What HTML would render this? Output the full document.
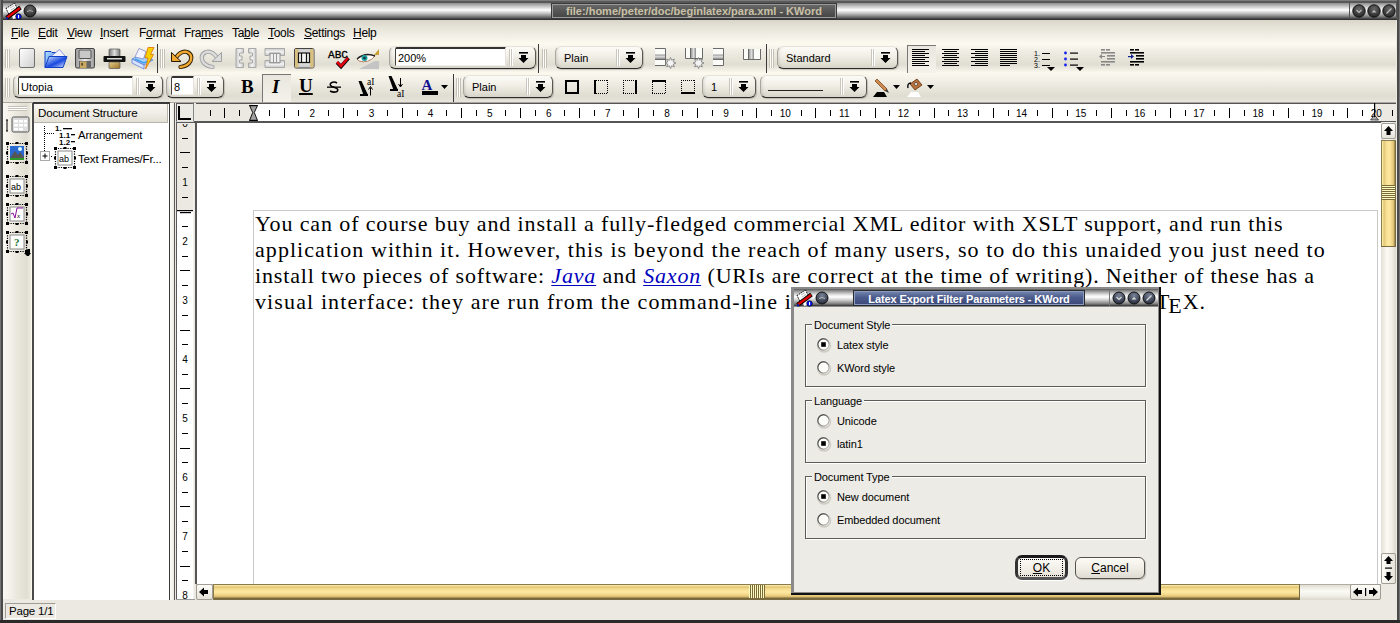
<!DOCTYPE html><html><head><meta charset="utf-8"><style>
*{box-sizing:border-box;margin:0;padding:0}
html,body{width:1400px;height:623px;overflow:hidden;background:#ebe9e1;font-family:"Liberation Sans",sans-serif;font-size:11px;color:#000}
.a{position:absolute}
.t{white-space:nowrap;line-height:13px}
u{text-decoration:underline}
.grip{background:repeating-linear-gradient(90deg,#c9c6bb 0,#c9c6bb 1px,#fbfaf6 1px,#fbfaf6 2px)}
.combo{border:1px solid #8a877e;border-radius:5px;background:linear-gradient(#fbfaf5,#eeece4 45%,#e2dfd5 80%,#d8d5ca);box-shadow:0 1px 1px rgba(0,0,0,.25)}
.field{background:#fff;border:1px solid #6f6c64;border-right-color:#e0ded6;border-bottom-color:#e0ded6}
</style></head><body>
<div class="a" style="left:0px;top:0px;width:1400px;height:623px;background:#ebe9e1"></div>
<div class="a" style="left:0px;top:0px;width:1400px;height:20px;background:linear-gradient(#7c7c7c 0,#7c7c7c 1px,#585858 1px,#585858 2.5px,#8e8e8e 3px,#cfcfcf 7px,#ffffff 10px,#d4d4d4 12.5px,#8a8a8a 16px,#4a4a4a 18.5px,#262626 20px)"></div>
<div class="a" style="left:551px;top:3px;width:286px;height:16px;background:linear-gradient(#6a6a6a,#555 50%,#444);border:1px solid #3a3a3a;box-shadow:inset 0 0 0 1px #9a9a9a"></div>
<div class="a t" style="left:551px;top:5px;width:286px;text-align:center;color:#c9c1a6;font-weight:bold;font-size:11px;line-height:13px;letter-spacing:0px">file:/home/peter/doc/beginlatex/para.xml - KWord</div>
<svg class="a" style="left:5px;top:2px;" width="18" height="18" viewBox="0 0 18 18"><path d="M1 6.5 L9.5 1 L13 8 L4.5 13.5 Z" fill="#fff" stroke="#000" stroke-width="1" stroke-dasharray="1.5 1"/><path d="M5 6 L9 3.5 M6 8 L10 5.5" stroke="#888" stroke-width=".6"/><path d="M7 14 L11 12 L12 16 L8 17 Z" fill="#fff"/><path d="M1.5 16 L15.5 5.5" stroke="#000" stroke-width="4.2"/><path d="M2 15.5 L15 6" stroke="#e00000" stroke-width="2.4"/><path d="M1 17 L3 15.5" stroke="#1020c0" stroke-width="1.6"/><circle cx="13.5" cy="14.5" r="2.8" fill="#0010f0" stroke="#000" stroke-width=".6"/><rect x="13" y="13" width="1.1" height="3.2" fill="#fff"/></svg>
<svg class="a" style="left:22px;top:2.5px;" width="16" height="16" viewBox="0 0 16 16"><defs><radialGradient id="rb30" cx="50%" cy="35%" r="60%"><stop offset="0" stop-color="#6a6a6a"/><stop offset="1" stop-color="#2a2a2a"/></radialGradient></defs><circle cx="8" cy="8" r="6" fill="url(#rb30)" stroke="#111" stroke-width="1"/><path d="M5 8.5 Q8 6.5 11 8.5" stroke="#aaa" fill="none" stroke-width="1"/></svg>
<svg class="a" style="left:1350.5px;top:3.3000000000000007px;" width="16" height="16" viewBox="0 0 16 16"><defs><radialGradient id="rb1358.5" cx="50%" cy="35%" r="60%"><stop offset="0" stop-color="#6a6a6a"/><stop offset="1" stop-color="#2a2a2a"/></radialGradient></defs><circle cx="8" cy="8" r="6.2" fill="url(#rb1358.5)" stroke="#111" stroke-width="1"/><path d="M5.5 7 L8 9.5 L10.5 7" stroke="#bbb" fill="none" stroke-width="1.2"/></svg>
<svg class="a" style="left:1365.5px;top:3.3000000000000007px;" width="16" height="16" viewBox="0 0 16 16"><defs><radialGradient id="rb1373.5" cx="50%" cy="35%" r="60%"><stop offset="0" stop-color="#6a6a6a"/><stop offset="1" stop-color="#2a2a2a"/></radialGradient></defs><circle cx="8" cy="8" r="6.2" fill="url(#rb1373.5)" stroke="#111" stroke-width="1"/><path d="M5.5 9.5 L8 7 L10.5 9.5 Z" fill="#bbb"/></svg>
<svg class="a" style="left:1380.5px;top:3.3000000000000007px;" width="16" height="16" viewBox="0 0 16 16"><defs><radialGradient id="rb1388.5" cx="50%" cy="35%" r="60%"><stop offset="0" stop-color="#6a6a6a"/><stop offset="1" stop-color="#2a2a2a"/></radialGradient></defs><circle cx="8" cy="8" r="6.2" fill="url(#rb1388.5)" stroke="#111" stroke-width="1"/><path d="M5.5 10.5 L10.5 5.5" stroke="#bbb" stroke-width="1.2"/></svg>
<div class="a" style="left:1349px;top:3px;width:1px;height:16px;background:#555"></div>
<div class="a" style="left:1396px;top:3px;width:1px;height:16px;background:#555"></div>
<div class="a" style="left:2px;top:20px;width:1394px;height:24px;background:linear-gradient(#d9d5c9 0,#e6e3d8 30%,#f3f1e7 70%,#fdfbf0 100%)"></div>
<div class="a t" style="left:11px;top:27px;font-size:12px;line-height:13px;letter-spacing:-0.3px"><u>F</u>ile</div>
<div class="a t" style="left:38px;top:27px;font-size:12px;line-height:13px;letter-spacing:-0.3px"><u>E</u>dit</div>
<div class="a t" style="left:67px;top:27px;font-size:12px;line-height:13px;letter-spacing:-0.3px"><u>V</u>iew</div>
<div class="a t" style="left:100px;top:27px;font-size:12px;line-height:13px;letter-spacing:-0.3px"><u>I</u>nsert</div>
<div class="a t" style="left:139px;top:27px;font-size:12px;line-height:13px;letter-spacing:-0.3px">F<u>o</u>rmat</div>
<div class="a t" style="left:184px;top:27px;font-size:12px;line-height:13px;letter-spacing:-0.3px">Fra<u>m</u>es</div>
<div class="a t" style="left:232px;top:27px;font-size:12px;line-height:13px;letter-spacing:-0.3px">Ta<u>b</u>le</div>
<div class="a t" style="left:268px;top:27px;font-size:12px;line-height:13px;letter-spacing:-0.3px"><u>T</u>ools</div>
<div class="a t" style="left:304px;top:27px;font-size:12px;line-height:13px;letter-spacing:-0.3px"><u>S</u>ettings</div>
<div class="a t" style="left:353px;top:27px;font-size:12px;line-height:13px;letter-spacing:-0.3px"><u>H</u>elp</div>
<div class="a" style="left:2px;top:44px;width:1394px;height:29px;background:linear-gradient(#fdfbf0 0,#f0eee5 22%,#e6e3d8 55%,#e0ddd2 70%,#eeebe2 86%,#fcfaef 100%)"></div>
<div class="a" style="left:2px;top:73px;width:1394px;height:30px;background:linear-gradient(#fcfaef 0,#f0eee5 28%,#e6e3d9 58%,#dfdcd1 77%,#e6e4db 93%,#ebe9e1 100%)"></div>
<div class="a" style="left:5px;top:49px;width:5px;height:19px;"></div>
<svg class="a" style="left:5px;top:49px;" width="5" height="19" viewBox="0 0 5 19"><rect x="0" y="0" width="1" height="19" fill="#c4c1b6"/><rect x="1" y="0" width="1" height="19" fill="#fdfcf8"/><rect x="2" y="0" width="1" height="19" fill="#c4c1b6"/><rect x="3" y="0" width="1" height="19" fill="#fdfcf8"/><rect x="4" y="0" width="1" height="19" fill="#c4c1b6"/><rect x="5" y="0" width="1" height="19" fill="#fdfcf8"/></svg>
<svg class="a" style="left:18px;top:47px;" width="18" height="22" viewBox="0 0 18 22"><defs><linearGradient id="nd" x1="0" y1="0" x2="1" y2="1"><stop offset="0" stop-color="#ffffff"/><stop offset="1" stop-color="#cfcfcf"/></linearGradient></defs><rect x="1.5" y="1.5" width="15" height="19" rx="1.5" fill="url(#nd)" stroke="#707070"/></svg>
<svg class="a" style="left:44px;top:48px;" width="24" height="21" viewBox="0 0 24 21"><defs><linearGradient id="fb" x1="0" y1="0" x2="1" y2="1"><stop offset="0" stop-color="#b8e8ff"/><stop offset="1" stop-color="#2a60e0"/></linearGradient><linearGradient id="ff" x1="0" y1="0" x2="1" y2="1"><stop offset="0" stop-color="#d8ecff"/><stop offset=".55" stop-color="#1848e0"/><stop offset="1" stop-color="#e8eeff"/></linearGradient></defs><path d="M1 3.5 H7 L8 4.5 H13 V19.5 H1 Z" fill="url(#fb)" stroke="#1040c8"/><path d="M5 10 L15.5 1.5 L21 8 L13 14 Z" fill="#f0f0ff" stroke="#7080d0" stroke-width=".8"/><path d="M1 19.5 L5 8.5 H23 L19 19.5 Z" fill="url(#ff)" stroke="#1040c8"/></svg>
<svg class="a" style="left:75px;top:48px;" width="20" height="21" viewBox="0 0 20 21"><defs><linearGradient id="fl" x1="0" y1="0" x2="1" y2="0"><stop offset="0" stop-color="#999"/><stop offset=".5" stop-color="#eee"/><stop offset="1" stop-color="#999"/></linearGradient></defs><rect x="0.5" y="0.5" width="19" height="19.5" rx="1.5" fill="url(#fl)" stroke="#444"/><rect x="4" y="2" width="12" height="8.5" rx="1" fill="#c8c8c8" stroke="#333" stroke-width=".8"/><rect x="4" y="13" width="12" height="7" fill="#666"/><rect x="5" y="13.5" width="6.5" height="6.5" fill="#c8a860"/><rect x="6.5" y="15" width="1.2" height="2.5" fill="#222"/></svg>
<svg class="a" style="left:103px;top:48px;" width="23" height="21" viewBox="0 0 23 21"><defs><linearGradient id="pr" x1="0" y1="0" x2="1" y2="0"><stop offset="0" stop-color="#777"/><stop offset=".5" stop-color="#ddd"/><stop offset="1" stop-color="#777"/></linearGradient><linearGradient id="pg" x1="0" y1="0" x2="1" y2="1"><stop offset="0" stop-color="#e8d090"/><stop offset="1" stop-color="#9a7020"/></linearGradient></defs><rect x="6" y="1" width="11" height="8" rx="1" fill="url(#pr)" stroke="#555" stroke-width=".7"/><rect x="0.5" y="8" width="22" height="6" rx="1" fill="#111"/><rect x="4" y="10" width="15" height="1.5" fill="#ddd"/><rect x="6" y="14" width="11" height="6.5" rx="1" fill="url(#pg)" stroke="#555" stroke-width=".7"/></svg>
<svg class="a" style="left:131px;top:46px;" width="24" height="24" viewBox="0 0 24 24"><path d="M1 13 L10 8.5 L22 14 L13 19 Z" fill="#a8d0f8" stroke="#5070d0" stroke-width=".7"/><path d="M1 13 V17 L13 23 V19 Z" fill="#d8e4ff" stroke="#5070d0" stroke-width=".7"/><path d="M4 11 L8 2.5 L15 5.5 L12.5 13 Z" fill="#f4f4ff" stroke="#7080c0" stroke-width=".7"/><path d="M4 13 L13 17 L21 13" fill="none" stroke="#40a0f0" stroke-width="1.5"/><path d="M17 1.5 L23 1.5 L19.5 8.5 L22.5 8.5 L14.5 23 L17 12 L14 12 Z" fill="#f8d000" stroke="#e07000" stroke-width=".8"/></svg>
<div class="a" style="left:157px;top:44px;width:1px;height:29px;background:#3a3a3a"></div>
<div class="a" style="left:160px;top:49px;width:5px;height:19px;"></div>
<svg class="a" style="left:160px;top:49px;" width="5" height="19" viewBox="0 0 5 19"><rect x="0" y="0" width="1" height="19" fill="#c4c1b6"/><rect x="1" y="0" width="1" height="19" fill="#fdfcf8"/><rect x="2" y="0" width="1" height="19" fill="#c4c1b6"/><rect x="3" y="0" width="1" height="19" fill="#fdfcf8"/><rect x="4" y="0" width="1" height="19" fill="#c4c1b6"/><rect x="5" y="0" width="1" height="19" fill="#fdfcf8"/></svg>
<svg class="a" style="left:170px;top:48px;" width="24" height="22" viewBox="0 0 24 22"><path d="M6 9.5 Q11 2.5 17 4 Q23 6.5 20.5 13 Q18 18 10.5 19" stroke="#2a1a00" stroke-width="4.2" fill="none" stroke-linecap="round"/><path d="M6 9.5 Q11 2.5 17 4 Q23 6.5 20.5 13 Q18 18 10.5 19" stroke="#f0a830" stroke-width="2.4" fill="none" stroke-linecap="round"/><path d="M1.5 4.5 L1.5 13.5 L11 13.5 Z" fill="#f0a830" stroke="#2a1a00" stroke-width="1" stroke-linejoin="round"/></svg>
<svg class="a" style="left:199px;top:48px;" width="24" height="22" viewBox="0 0 24 22"><g transform="translate(24 0) scale(-1 1)"><path d="M6 9.5 Q11 2.5 17 4 Q23 6.5 20.5 13 Q18 18 10.5 19" stroke="#a0a0a0" stroke-width="4.2" fill="none" stroke-linecap="round"/><path d="M6 9.5 Q11 2.5 17 4 Q23 6.5 20.5 13 Q18 18 10.5 19" stroke="#dcdcdc" stroke-width="2.4" fill="none" stroke-linecap="round"/><path d="M1.5 4.5 L1.5 13.5 L11 13.5 Z" fill="#dcdcdc" stroke="#a0a0a0" stroke-width="1" stroke-linejoin="round"/></g></svg>
<svg class="a" style="left:235px;top:48px;" width="22" height="21" viewBox="0 0 22 21"><defs><linearGradient id="gv" x1="0" y1="0" x2="1" y2="0"><stop offset="0" stop-color="#c8c8c8"/><stop offset=".5" stop-color="#f4f4f4"/><stop offset="1" stop-color="#c8c8c8"/></linearGradient><linearGradient id="gh" x1="0" y1="0" x2="0" y2="1"><stop offset="0" stop-color="#c8c8c8"/><stop offset=".5" stop-color="#f4f4f4"/><stop offset="1" stop-color="#c8c8c8"/></linearGradient></defs><path d="M1 0.5 H8.5 V5 H4.5 V8 H7 V12 H4.5 V15 H8.5 V19.5 H1 Z" fill="url(#gv)" stroke="#a8a8a8" stroke-linejoin="round"/><path d="M21 0.5 H13.5 V5 H17.5 V8 H15 V12 H17.5 V15 H13.5 V19.5 H21 Z" fill="url(#gv)" stroke="#a8a8a8" stroke-linejoin="round"/></svg>
<svg class="a" style="left:264px;top:48px;" width="22" height="21" viewBox="0 0 22 21"><defs><linearGradient id="gv" x1="0" y1="0" x2="1" y2="0"><stop offset="0" stop-color="#c8c8c8"/><stop offset=".5" stop-color="#f4f4f4"/><stop offset="1" stop-color="#c8c8c8"/></linearGradient><linearGradient id="gh" x1="0" y1="0" x2="0" y2="1"><stop offset="0" stop-color="#c8c8c8"/><stop offset=".5" stop-color="#f4f4f4"/><stop offset="1" stop-color="#c8c8c8"/></linearGradient></defs><path d="M1 0.5 H20.5 V7.5 H16 V5 H5.5 V7.5 H1 Z" fill="url(#gh)" stroke="#a8a8a8" stroke-linejoin="round"/><path d="M1 19.5 H20.5 V12.5 H16 V15 H5.5 V12.5 H1 Z" fill="url(#gh)" stroke="#a8a8a8" stroke-linejoin="round"/><rect x="6" y="5.5" width="10" height="9" fill="#eee" stroke="#999"/><path d="M9.5 5.5 V14.5 M12.5 5.5 V14.5" stroke="#999"/></svg>
<svg class="a" style="left:294px;top:48px;" width="21" height="21" viewBox="0 0 21 21"><defs><linearGradient id="gv" x1="0" y1="0" x2="1" y2="0"><stop offset="0" stop-color="#c8c8c8"/><stop offset=".5" stop-color="#f4f4f4"/><stop offset="1" stop-color="#c8c8c8"/></linearGradient><linearGradient id="gh" x1="0" y1="0" x2="0" y2="1"><stop offset="0" stop-color="#c8c8c8"/><stop offset=".5" stop-color="#f4f4f4"/><stop offset="1" stop-color="#c8c8c8"/></linearGradient></defs><rect x="0.5" y="0.5" width="19.5" height="19.5" rx="1.5" fill="url(#gh)" stroke="#444"/><rect x="1" y="1" width="3.5" height="18.5" fill="#d8c080"/><rect x="16" y="1" width="3.5" height="18.5" fill="#d8c080"/><rect x="4.5" y="5" width="11" height="9.5" fill="#f4f4f4" stroke="#111" stroke-width="1.2"/><path d="M7.5 5 V14.5 M12.5 5 V14.5" stroke="#111" stroke-width="1.2"/></svg>
<svg class="a" style="left:327px;top:47px;" width="24" height="23" viewBox="0 0 24 23"><text x="1" y="11" font-family="Liberation Mono" font-size="11" fill="#000" stroke="#000" stroke-width=".3" textLength="20" lengthAdjust="spacingAndGlyphs">ABC</text><path d="M10 15.5 L14 19.5 L21.5 11" stroke="#000" stroke-width="3.6" fill="none" stroke-linejoin="miter"/><path d="M10 15 L14 19 L21 11" stroke="#e00010" stroke-width="2.6" fill="none"/></svg>
<svg class="a" style="left:356px;top:47px;" width="25" height="23" viewBox="0 0 25 23"><path d="M3 22 L23 12 V22 Z" fill="#c4c4c4"/><path d="M23 2 L18 8 H23 Z" fill="#c8a030"/><rect x="18" y="8" width="5" height="6" fill="#e8e4d0"/><path d="M1 12 Q9 5 19 9 Q12 17 3 14 Z" fill="#fff" stroke="#b07050" stroke-width=".9"/><path d="M1 12 Q9 5 19 9" fill="none" stroke="#222" stroke-width="1.4"/><circle cx="8.5" cy="11" r="3" fill="#20a0a0"/><circle cx="8.5" cy="11" r="1.3" fill="#103040"/></svg>
<div class="a" style="left:389px;top:46px;width:147px;height:23px;border:1px solid #8a877e;border-top-color:#e6e3da;border-left-color:#a9a69d;border-right-color:#5a5750;border-bottom-color:#2e2c28;border-radius:6px;background:linear-gradient(#fcfbf7 0,#f2f0e8 40%,#e4e1d7 75%,#d6d3c8 100%);box-shadow:1px 1px 1px rgba(0,0,0,.18), inset 3px 0 3px -2px rgba(0,0,0,.12)"></div>
<svg class="a" style="left:509px;top:49px;" width="4" height="17" viewBox="0 0 4 17"><rect x="0" width="1" height="100" fill="#c9c6bb"/><rect x="1" width="1" height="100" fill="#fff"/><rect x="2" width="1" height="100" fill="#c9c6bb"/><rect x="3" width="1" height="100" fill="#fff"/></svg>
<svg class="a" style="left:517px;top:51px;" width="13" height="14" viewBox="0 0 13 14"><rect x="2" y="1" width="9" height="1.6" fill="#000"/><path d="M4 4 H9 V7 H11.5 L6.5 12 L1.5 7 H4 Z" fill="#000"/></svg>
<div class="a" style="left:395px;top:47px;width:111px;height:19px;background:#fff;border:1px solid #46433c;border-top:2px solid #333;border-right:1px solid #e6e4dc;border-bottom:1px solid #f0eee8;border-radius:2px 0 0 0"></div>
<div class="a t" style="left:398px;top:52px;font-size:11px;line-height:13px">200%</div>
<div class="a" style="left:538px;top:44px;width:1px;height:29px;background:#3a3a3a"></div>
<div class="a" style="left:542px;top:49px;width:5px;height:19px;"></div>
<svg class="a" style="left:542px;top:49px;" width="5" height="19" viewBox="0 0 5 19"><rect x="0" y="0" width="1" height="19" fill="#c4c1b6"/><rect x="1" y="0" width="1" height="19" fill="#fdfcf8"/><rect x="2" y="0" width="1" height="19" fill="#c4c1b6"/><rect x="3" y="0" width="1" height="19" fill="#fdfcf8"/><rect x="4" y="0" width="1" height="19" fill="#c4c1b6"/><rect x="5" y="0" width="1" height="19" fill="#fdfcf8"/></svg>
<div class="a" style="left:555px;top:46px;width:88px;height:23px;border:1px solid #8a877e;border-top-color:#e6e3da;border-left-color:#a9a69d;border-right-color:#5a5750;border-bottom-color:#2e2c28;border-radius:6px;background:linear-gradient(#fcfbf7 0,#f2f0e8 40%,#e4e1d7 75%,#d6d3c8 100%);box-shadow:1px 1px 1px rgba(0,0,0,.18), inset 3px 0 3px -2px rgba(0,0,0,.12)"></div>
<svg class="a" style="left:616px;top:49px;" width="4" height="17" viewBox="0 0 4 17"><rect x="0" width="1" height="100" fill="#c9c6bb"/><rect x="1" width="1" height="100" fill="#fff"/><rect x="2" width="1" height="100" fill="#c9c6bb"/><rect x="3" width="1" height="100" fill="#fff"/></svg>
<svg class="a" style="left:624px;top:51px;" width="13" height="14" viewBox="0 0 13 14"><rect x="2" y="1" width="9" height="1.6" fill="#000"/><path d="M4 4 H9 V7 H11.5 L6.5 12 L1.5 7 H4 Z" fill="#000"/></svg>
<div class="a t" style="left:564px;top:52px;font-size:11px;line-height:13px">Plain</div>
<svg class="a" style="left:655px;top:48px;" width="24" height="22" viewBox="0 0 24 22"><defs><linearGradient id="pgv" x1="0" y1="0" x2="0" y2="1"><stop offset="0" stop-color="#999"/><stop offset=".5" stop-color="#ddd"/><stop offset="1" stop-color="#888"/></linearGradient><linearGradient id="pgh" x1="0" y1="0" x2="1" y2="0"><stop offset="0" stop-color="#999"/><stop offset=".5" stop-color="#ddd"/><stop offset="1" stop-color="#888"/></linearGradient></defs><rect x="0" y="1" width="11" height="16" fill="#fbfbf8"/><rect x="0" y="6.5" width="11" height="4.5" fill="url(#pgv)"/><path d="M0 0.5 H10.5 V17.5 H0 M0 11.5 H10.5" fill="none" stroke="#6a6a6a"/><path d="M15.50 9.50 L16.65 12.23 L19.39 11.11 L18.27 13.85 L21.00 15.00 L18.27 16.15 L19.39 18.89 L16.65 17.77 L15.50 20.50 L14.35 17.77 L11.61 18.89 L12.73 16.15 L10.00 15.00 L12.73 13.85 L11.61 11.11 L14.35 12.23 Z" fill="#f4f4f4" stroke="#777" stroke-width=".8"/></svg>
<svg class="a" style="left:685px;top:48px;" width="24" height="22" viewBox="0 0 24 22"><defs><linearGradient id="pgv" x1="0" y1="0" x2="0" y2="1"><stop offset="0" stop-color="#999"/><stop offset=".5" stop-color="#ddd"/><stop offset="1" stop-color="#888"/></linearGradient><linearGradient id="pgh" x1="0" y1="0" x2="1" y2="0"><stop offset="0" stop-color="#999"/><stop offset=".5" stop-color="#ddd"/><stop offset="1" stop-color="#888"/></linearGradient></defs><rect x="1" y="0" width="16" height="10.5" fill="#fbfbf8"/><rect x="6" y="0" width="5" height="10.5" fill="url(#pgh)"/><path d="M0.5 0 V10.5 H17.5 V0 M5.5 0 V10.5" fill="none" stroke="#6a6a6a"/><path d="M13.50 9.50 L14.65 12.23 L17.39 11.11 L16.27 13.85 L19.00 15.00 L16.27 16.15 L17.39 18.89 L14.65 17.77 L13.50 20.50 L12.35 17.77 L9.61 18.89 L10.73 16.15 L8.00 15.00 L10.73 13.85 L9.61 11.11 L12.35 12.23 Z" fill="#f4f4f4" stroke="#777" stroke-width=".8"/></svg>
<svg class="a" style="left:713px;top:48px;" width="24" height="22" viewBox="0 0 24 22"><defs><linearGradient id="pgv" x1="0" y1="0" x2="0" y2="1"><stop offset="0" stop-color="#999"/><stop offset=".5" stop-color="#ddd"/><stop offset="1" stop-color="#888"/></linearGradient><linearGradient id="pgh" x1="0" y1="0" x2="1" y2="0"><stop offset="0" stop-color="#999"/><stop offset=".5" stop-color="#ddd"/><stop offset="1" stop-color="#888"/></linearGradient></defs><rect x="0" y="1" width="11" height="16" fill="#fbfbf8"/><rect x="0" y="6.5" width="11" height="4.5" fill="url(#pgv)"/><path d="M0 0.5 H10.5 V17.5 H0 M0 11.5 H10.5" fill="none" stroke="#6a6a6a"/></svg>
<svg class="a" style="left:743px;top:49px;" width="24" height="22" viewBox="0 0 24 22"><defs><linearGradient id="pgv" x1="0" y1="0" x2="0" y2="1"><stop offset="0" stop-color="#999"/><stop offset=".5" stop-color="#ddd"/><stop offset="1" stop-color="#888"/></linearGradient><linearGradient id="pgh" x1="0" y1="0" x2="1" y2="0"><stop offset="0" stop-color="#999"/><stop offset=".5" stop-color="#ddd"/><stop offset="1" stop-color="#888"/></linearGradient></defs><rect x="1" y="0" width="16" height="10.5" fill="#fbfbf8"/><rect x="6" y="0" width="5" height="10.5" fill="url(#pgh)"/><path d="M0.5 0 V10.5 H17.5 V0 M5.5 0 V10.5" fill="none" stroke="#6a6a6a"/></svg>
<div class="a" style="left:766px;top:44px;width:1px;height:29px;background:#3a3a3a"></div>
<div class="a" style="left:769px;top:49px;width:5px;height:19px;"></div>
<svg class="a" style="left:769px;top:49px;" width="5" height="19" viewBox="0 0 5 19"><rect x="0" y="0" width="1" height="19" fill="#c4c1b6"/><rect x="1" y="0" width="1" height="19" fill="#fdfcf8"/><rect x="2" y="0" width="1" height="19" fill="#c4c1b6"/><rect x="3" y="0" width="1" height="19" fill="#fdfcf8"/><rect x="4" y="0" width="1" height="19" fill="#c4c1b6"/><rect x="5" y="0" width="1" height="19" fill="#fdfcf8"/></svg>
<div class="a" style="left:777px;top:46px;width:121px;height:23px;border:1px solid #8a877e;border-top-color:#e6e3da;border-left-color:#a9a69d;border-right-color:#5a5750;border-bottom-color:#2e2c28;border-radius:6px;background:linear-gradient(#fcfbf7 0,#f2f0e8 40%,#e4e1d7 75%,#d6d3c8 100%);box-shadow:1px 1px 1px rgba(0,0,0,.18), inset 3px 0 3px -2px rgba(0,0,0,.12)"></div>
<svg class="a" style="left:871px;top:49px;" width="4" height="17" viewBox="0 0 4 17"><rect x="0" width="1" height="100" fill="#c9c6bb"/><rect x="1" width="1" height="100" fill="#fff"/><rect x="2" width="1" height="100" fill="#c9c6bb"/><rect x="3" width="1" height="100" fill="#fff"/></svg>
<svg class="a" style="left:879px;top:51px;" width="13" height="14" viewBox="0 0 13 14"><rect x="2" y="1" width="9" height="1.6" fill="#000"/><path d="M4 4 H9 V7 H11.5 L6.5 12 L1.5 7 H4 Z" fill="#000"/></svg>
<div class="a t" style="left:786px;top:52px;font-size:11px;line-height:13px">Standard</div>
<div class="a" style="left:907px;top:45px;width:29px;height:28px;background:linear-gradient(#e9e6dd,#f4f2ea);border-left:1px solid #777;border-top:1px solid #777"></div>
<svg class="a" style="left:912px;top:49px;" width="18" height="18" viewBox="0 0 18 18"><rect x="0" y="0" width="17" height="1" fill="#000"/><rect x="0" y="2" width="13" height="1" fill="#000"/><rect x="0" y="4" width="17" height="1" fill="#000"/><rect x="0" y="6" width="13" height="1" fill="#000"/><rect x="0" y="8" width="17" height="1" fill="#000"/><rect x="0" y="10" width="13" height="1" fill="#000"/><rect x="0" y="12" width="17" height="1" fill="#000"/><rect x="0" y="14" width="13" height="1" fill="#000"/><rect x="0" y="16" width="17" height="1" fill="#000"/></svg>
<svg class="a" style="left:942px;top:49px;" width="18" height="18" viewBox="0 0 18 18"><rect x="0" y="0" width="17" height="1" fill="#000"/><rect x="2" y="2" width="13" height="1" fill="#000"/><rect x="0" y="4" width="17" height="1" fill="#000"/><rect x="2" y="6" width="13" height="1" fill="#000"/><rect x="0" y="8" width="17" height="1" fill="#000"/><rect x="2" y="10" width="13" height="1" fill="#000"/><rect x="0" y="12" width="17" height="1" fill="#000"/><rect x="2" y="14" width="13" height="1" fill="#000"/><rect x="0" y="16" width="17" height="1" fill="#000"/></svg>
<svg class="a" style="left:971px;top:49px;" width="18" height="18" viewBox="0 0 18 18"><rect x="0" y="0" width="17" height="1" fill="#000"/><rect x="4" y="2" width="13" height="1" fill="#000"/><rect x="0" y="4" width="17" height="1" fill="#000"/><rect x="4" y="6" width="13" height="1" fill="#000"/><rect x="0" y="8" width="17" height="1" fill="#000"/><rect x="4" y="10" width="13" height="1" fill="#000"/><rect x="0" y="12" width="17" height="1" fill="#000"/><rect x="4" y="14" width="13" height="1" fill="#000"/><rect x="0" y="16" width="17" height="1" fill="#000"/></svg>
<svg class="a" style="left:1000px;top:49px;" width="18" height="18" viewBox="0 0 18 18"><rect x="0" y="0" width="17" height="1" fill="#000"/><rect x="0" y="2" width="17" height="1" fill="#000"/><rect x="0" y="4" width="17" height="1" fill="#000"/><rect x="0" y="6" width="17" height="1" fill="#000"/><rect x="0" y="8" width="17" height="1" fill="#000"/><rect x="0" y="10" width="17" height="1" fill="#000"/><rect x="0" y="12" width="17" height="1" fill="#000"/><rect x="0" y="14" width="17" height="1" fill="#000"/><rect x="0" y="16" width="10" height="1" fill="#000"/></svg>
<svg class="a" style="left:1033px;top:47px;" width="28" height="26" viewBox="0 0 28 26"><g font-size="7" font-family="Liberation Sans"><text x="1" y="9">1.</text><text x="1" y="15">2.</text><text x="1" y="21">3.</text></g><rect x="9" y="6" width="8" height="1"/><rect x="9" y="12" width="8" height="1"/><rect x="9" y="18" width="8" height="1"/><path d="M14 20 H22 L18 24 Z"/></svg>
<svg class="a" style="left:1063px;top:47px;" width="28" height="26" viewBox="0 0 28 26"><circle cx="2.5" cy="6" r="1.4" fill="#1020f0"/><circle cx="2.5" cy="12" r="1.4" fill="#1020f0"/><circle cx="2.5" cy="18" r="1.4" fill="#1020f0"/><rect x="7" y="5.5" width="8" height="1.2"/><rect x="7" y="11.5" width="8" height="1.2"/><rect x="7" y="17.5" width="8" height="1.2"/><path d="M13 20 H21 L17 24 Z"/></svg>
<svg class="a" style="left:1098px;top:47px;" width="20" height="22" viewBox="0 0 20 22"><g fill="#888"><rect x="3" y="2" width="4" height="1.6"/><rect x="8" y="2" width="4" height="1.6"/><rect x="3" y="5" width="14" height="1.6"/><rect x="9" y="8" width="8" height="1.6"/><rect x="9" y="11" width="8" height="1.6"/><rect x="3" y="14" width="14" height="1.6"/><rect x="3" y="17" width="4" height="1.6"/><rect x="8" y="17" width="4" height="1.6"/><path d="M1 9.5 L4 7 V12 Z"/><rect x="3" y="9" width="4" height="1"/></g></svg>
<svg class="a" style="left:1127px;top:47px;" width="20" height="22" viewBox="0 0 20 22"><g fill="#000"><rect x="3" y="2" width="4" height="1.6"/><rect x="8" y="2" width="4" height="1.6"/><rect x="3" y="5" width="14" height="1.6"/><rect x="9" y="8" width="8" height="1.6"/><rect x="9" y="11" width="8" height="1.6"/><rect x="3" y="14" width="14" height="1.6"/><rect x="3" y="17" width="4" height="1.6"/><rect x="8" y="17" width="4" height="1.6"/></g><path d="M7 9.5 L4 7 V12 Z" fill="#102090"/><rect x="1" y="9" width="4" height="1.2" fill="#102090"/></svg>
<div class="a" style="left:5px;top:78px;width:5px;height:19px;"></div>
<svg class="a" style="left:5px;top:78px;" width="5" height="19" viewBox="0 0 5 19"><rect x="0" y="0" width="1" height="19" fill="#c4c1b6"/><rect x="1" y="0" width="1" height="19" fill="#fdfcf8"/><rect x="2" y="0" width="1" height="19" fill="#c4c1b6"/><rect x="3" y="0" width="1" height="19" fill="#fdfcf8"/><rect x="4" y="0" width="1" height="19" fill="#c4c1b6"/><rect x="5" y="0" width="1" height="19" fill="#fdfcf8"/></svg>
<div class="a" style="left:13px;top:75px;width:150px;height:23px;border:1px solid #8a877e;border-top-color:#e6e3da;border-left-color:#a9a69d;border-right-color:#5a5750;border-bottom-color:#2e2c28;border-radius:6px;background:linear-gradient(#fcfbf7 0,#f2f0e8 40%,#e4e1d7 75%,#d6d3c8 100%);box-shadow:1px 1px 1px rgba(0,0,0,.18), inset 3px 0 3px -2px rgba(0,0,0,.12)"></div>
<svg class="a" style="left:136px;top:78px;" width="4" height="17" viewBox="0 0 4 17"><rect x="0" width="1" height="100" fill="#c9c6bb"/><rect x="1" width="1" height="100" fill="#fff"/><rect x="2" width="1" height="100" fill="#c9c6bb"/><rect x="3" width="1" height="100" fill="#fff"/></svg>
<svg class="a" style="left:144px;top:80px;" width="13" height="14" viewBox="0 0 13 14"><rect x="2" y="1" width="9" height="1.6" fill="#000"/><path d="M4 4 H9 V7 H11.5 L6.5 12 L1.5 7 H4 Z" fill="#000"/></svg>
<div class="a" style="left:18px;top:76px;width:115px;height:19px;background:#fff;border:1px solid #46433c;border-top:2px solid #333;border-right:1px solid #e6e4dc;border-bottom:1px solid #f0eee8;border-radius:2px 0 0 0"></div>
<div class="a t" style="left:21px;top:81px;font-size:11px;line-height:13px">Utopia</div>
<div class="a" style="left:166px;top:75px;width:58px;height:23px;border:1px solid #8a877e;border-top-color:#e6e3da;border-left-color:#a9a69d;border-right-color:#5a5750;border-bottom-color:#2e2c28;border-radius:6px;background:linear-gradient(#fcfbf7 0,#f2f0e8 40%,#e4e1d7 75%,#d6d3c8 100%);box-shadow:1px 1px 1px rgba(0,0,0,.18), inset 3px 0 3px -2px rgba(0,0,0,.12)"></div>
<svg class="a" style="left:197px;top:78px;" width="4" height="17" viewBox="0 0 4 17"><rect x="0" width="1" height="100" fill="#c9c6bb"/><rect x="1" width="1" height="100" fill="#fff"/><rect x="2" width="1" height="100" fill="#c9c6bb"/><rect x="3" width="1" height="100" fill="#fff"/></svg>
<svg class="a" style="left:205px;top:80px;" width="13" height="14" viewBox="0 0 13 14"><rect x="2" y="1" width="9" height="1.6" fill="#000"/><path d="M4 4 H9 V7 H11.5 L6.5 12 L1.5 7 H4 Z" fill="#000"/></svg>
<div class="a" style="left:171px;top:76px;width:23px;height:19px;background:#fff;border:1px solid #46433c;border-top:2px solid #333;border-right:1px solid #e6e4dc;border-bottom:1px solid #f0eee8;border-radius:2px 0 0 0"></div>
<div class="a t" style="left:174px;top:81px;font-size:11px;line-height:13px">8</div>
<div class="a t" style="left:241px;top:77px;font-family:'Liberation Serif',serif;font-weight:bold;font-size:19px;line-height:20px">B</div>
<div class="a" style="left:262px;top:74px;width:29px;height:28px;background:linear-gradient(#e9e6dd,#f4f2ea);border-left:1px solid #777;border-top:1px solid #777"></div>
<div class="a t" style="left:272px;top:77px;font-family:'Liberation Serif',serif;font-weight:bold;font-style:italic;font-size:19px;line-height:20px">I</div>
<div class="a t" style="left:299px;top:76px;font-family:'Liberation Serif',serif;font-weight:bold;font-size:19px;line-height:20px;text-decoration:underline;text-decoration-thickness:1.5px;text-underline-offset:1px">U</div>
<svg class="a" style="left:326px;top:79px;" width="16" height="16" viewBox="0 0 16 16"><path d="M11 4 Q8 2 5 4 Q3 6 6 7.5 L10 9 Q13 10.5 11 12.5 Q8 14 4 12" fill="none" stroke="#000" stroke-width="1.6"/><rect x="1" y="7.5" width="14" height="1.3" fill="#000"/></svg>
<svg class="a" style="left:357px;top:76px;" width="22" height="24" viewBox="0 0 22 24"><path d="M1.5 5 L4.5 5 L11 19 L6.5 19 Z" fill="#000"/><rect x="3" y="18" width="8" height="2" fill="#000"/><text x="10" y="8.5" font-size="9.5" font-family="Liberation Serif">aI</text><path d="M13.5 19.5 V11.5" stroke="#000" stroke-width="1"/><path d="M11.5 13.5 L13.5 10.5 L15.5 13.5" stroke="#000" fill="none" stroke-width="1"/></svg>
<svg class="a" style="left:387px;top:76px;" width="22" height="24" viewBox="0 0 22 24"><path d="M1.5 0 L4.5 0 L11 14 L6.5 14 Z" fill="#000"/><rect x="3" y="13" width="8" height="2" fill="#000"/><text x="10" y="21" font-size="9.5" font-family="Liberation Serif">aI</text><path d="M13.5 2 V10" stroke="#000" stroke-width="1"/><path d="M11.5 8 L13.5 11 L15.5 8" stroke="#000" fill="none" stroke-width="1"/></svg>
<svg class="a" style="left:421px;top:76px;" width="18" height="20" viewBox="0 0 18 20"><text x="0.5" y="13.5" font-size="15" font-weight="bold" font-family="Liberation Serif" fill="#101090">A</text><rect x="1" y="15" width="16" height="4" fill="#000"/></svg>
<svg class="a" style="left:441px;top:84px;" width="8" height="6" viewBox="0 0 8 6"><path d="M0 1 H7 L3.5 5 Z"/></svg>
<div class="a" style="left:453px;top:74px;width:1px;height:28px;background:#3a3a3a"></div>
<div class="a" style="left:456px;top:78px;width:5px;height:19px;"></div>
<svg class="a" style="left:456px;top:78px;" width="5" height="19" viewBox="0 0 5 19"><rect x="0" y="0" width="1" height="19" fill="#c4c1b6"/><rect x="1" y="0" width="1" height="19" fill="#fdfcf8"/><rect x="2" y="0" width="1" height="19" fill="#c4c1b6"/><rect x="3" y="0" width="1" height="19" fill="#fdfcf8"/><rect x="4" y="0" width="1" height="19" fill="#c4c1b6"/><rect x="5" y="0" width="1" height="19" fill="#fdfcf8"/></svg>
<div class="a" style="left:463px;top:75px;width:90px;height:23px;border:1px solid #8a877e;border-top-color:#e6e3da;border-left-color:#a9a69d;border-right-color:#5a5750;border-bottom-color:#2e2c28;border-radius:6px;background:linear-gradient(#fcfbf7 0,#f2f0e8 40%,#e4e1d7 75%,#d6d3c8 100%);box-shadow:1px 1px 1px rgba(0,0,0,.18), inset 3px 0 3px -2px rgba(0,0,0,.12)"></div>
<svg class="a" style="left:526px;top:78px;" width="4" height="17" viewBox="0 0 4 17"><rect x="0" width="1" height="100" fill="#c9c6bb"/><rect x="1" width="1" height="100" fill="#fff"/><rect x="2" width="1" height="100" fill="#c9c6bb"/><rect x="3" width="1" height="100" fill="#fff"/></svg>
<svg class="a" style="left:534px;top:80px;" width="13" height="14" viewBox="0 0 13 14"><rect x="2" y="1" width="9" height="1.6" fill="#000"/><path d="M4 4 H9 V7 H11.5 L6.5 12 L1.5 7 H4 Z" fill="#000"/></svg>
<div class="a t" style="left:472px;top:81px;font-size:11px;line-height:13px">Plain</div>
<svg class="a" style="left:565px;top:80px;" width="14" height="14" viewBox="0 0 14 14"><rect x="1" y="1" width="12" height="12" fill="none" stroke="#000" stroke-width="2"/></svg>
<svg class="a" style="left:594px;top:80px;" width="14" height="14" viewBox="0 0 14 14"><rect x="0" y="0" width="1" height="1"/><rect x="0" y="13" width="1" height="1"/><rect x="0" y="0" width="1" height="1"/><rect x="13" y="0" width="1" height="1"/><rect x="2" y="0" width="1" height="1"/><rect x="2" y="13" width="1" height="1"/><rect x="0" y="2" width="1" height="1"/><rect x="13" y="2" width="1" height="1"/><rect x="4" y="0" width="1" height="1"/><rect x="4" y="13" width="1" height="1"/><rect x="0" y="4" width="1" height="1"/><rect x="13" y="4" width="1" height="1"/><rect x="6" y="0" width="1" height="1"/><rect x="6" y="13" width="1" height="1"/><rect x="0" y="6" width="1" height="1"/><rect x="13" y="6" width="1" height="1"/><rect x="8" y="0" width="1" height="1"/><rect x="8" y="13" width="1" height="1"/><rect x="0" y="8" width="1" height="1"/><rect x="13" y="8" width="1" height="1"/><rect x="10" y="0" width="1" height="1"/><rect x="10" y="13" width="1" height="1"/><rect x="0" y="10" width="1" height="1"/><rect x="13" y="10" width="1" height="1"/><rect x="12" y="0" width="1" height="1"/><rect x="12" y="13" width="1" height="1"/><rect x="0" y="12" width="1" height="1"/><rect x="13" y="12" width="1" height="1"/><rect x="0" y="0" width="2" height="14" fill="#000"/></svg>
<svg class="a" style="left:623px;top:80px;" width="14" height="14" viewBox="0 0 14 14"><rect x="0" y="0" width="1" height="1"/><rect x="0" y="13" width="1" height="1"/><rect x="0" y="0" width="1" height="1"/><rect x="13" y="0" width="1" height="1"/><rect x="2" y="0" width="1" height="1"/><rect x="2" y="13" width="1" height="1"/><rect x="0" y="2" width="1" height="1"/><rect x="13" y="2" width="1" height="1"/><rect x="4" y="0" width="1" height="1"/><rect x="4" y="13" width="1" height="1"/><rect x="0" y="4" width="1" height="1"/><rect x="13" y="4" width="1" height="1"/><rect x="6" y="0" width="1" height="1"/><rect x="6" y="13" width="1" height="1"/><rect x="0" y="6" width="1" height="1"/><rect x="13" y="6" width="1" height="1"/><rect x="8" y="0" width="1" height="1"/><rect x="8" y="13" width="1" height="1"/><rect x="0" y="8" width="1" height="1"/><rect x="13" y="8" width="1" height="1"/><rect x="10" y="0" width="1" height="1"/><rect x="10" y="13" width="1" height="1"/><rect x="0" y="10" width="1" height="1"/><rect x="13" y="10" width="1" height="1"/><rect x="12" y="0" width="1" height="1"/><rect x="12" y="13" width="1" height="1"/><rect x="0" y="12" width="1" height="1"/><rect x="13" y="12" width="1" height="1"/><rect x="12" y="0" width="2" height="14" fill="#000"/></svg>
<svg class="a" style="left:652px;top:80px;" width="14" height="14" viewBox="0 0 14 14"><rect x="0" y="0" width="1" height="1"/><rect x="0" y="13" width="1" height="1"/><rect x="0" y="0" width="1" height="1"/><rect x="13" y="0" width="1" height="1"/><rect x="2" y="0" width="1" height="1"/><rect x="2" y="13" width="1" height="1"/><rect x="0" y="2" width="1" height="1"/><rect x="13" y="2" width="1" height="1"/><rect x="4" y="0" width="1" height="1"/><rect x="4" y="13" width="1" height="1"/><rect x="0" y="4" width="1" height="1"/><rect x="13" y="4" width="1" height="1"/><rect x="6" y="0" width="1" height="1"/><rect x="6" y="13" width="1" height="1"/><rect x="0" y="6" width="1" height="1"/><rect x="13" y="6" width="1" height="1"/><rect x="8" y="0" width="1" height="1"/><rect x="8" y="13" width="1" height="1"/><rect x="0" y="8" width="1" height="1"/><rect x="13" y="8" width="1" height="1"/><rect x="10" y="0" width="1" height="1"/><rect x="10" y="13" width="1" height="1"/><rect x="0" y="10" width="1" height="1"/><rect x="13" y="10" width="1" height="1"/><rect x="12" y="0" width="1" height="1"/><rect x="12" y="13" width="1" height="1"/><rect x="0" y="12" width="1" height="1"/><rect x="13" y="12" width="1" height="1"/><rect x="0" y="0" width="14" height="2" fill="#000"/></svg>
<svg class="a" style="left:681px;top:80px;" width="14" height="14" viewBox="0 0 14 14"><rect x="0" y="0" width="1" height="1"/><rect x="0" y="13" width="1" height="1"/><rect x="0" y="0" width="1" height="1"/><rect x="13" y="0" width="1" height="1"/><rect x="2" y="0" width="1" height="1"/><rect x="2" y="13" width="1" height="1"/><rect x="0" y="2" width="1" height="1"/><rect x="13" y="2" width="1" height="1"/><rect x="4" y="0" width="1" height="1"/><rect x="4" y="13" width="1" height="1"/><rect x="0" y="4" width="1" height="1"/><rect x="13" y="4" width="1" height="1"/><rect x="6" y="0" width="1" height="1"/><rect x="6" y="13" width="1" height="1"/><rect x="0" y="6" width="1" height="1"/><rect x="13" y="6" width="1" height="1"/><rect x="8" y="0" width="1" height="1"/><rect x="8" y="13" width="1" height="1"/><rect x="0" y="8" width="1" height="1"/><rect x="13" y="8" width="1" height="1"/><rect x="10" y="0" width="1" height="1"/><rect x="10" y="13" width="1" height="1"/><rect x="0" y="10" width="1" height="1"/><rect x="13" y="10" width="1" height="1"/><rect x="12" y="0" width="1" height="1"/><rect x="12" y="13" width="1" height="1"/><rect x="0" y="12" width="1" height="1"/><rect x="13" y="12" width="1" height="1"/><rect x="0" y="12" width="14" height="2" fill="#000"/></svg>
<div class="a" style="left:702px;top:75px;width:54px;height:23px;border:1px solid #8a877e;border-top-color:#e6e3da;border-left-color:#a9a69d;border-right-color:#5a5750;border-bottom-color:#2e2c28;border-radius:6px;background:linear-gradient(#fcfbf7 0,#f2f0e8 40%,#e4e1d7 75%,#d6d3c8 100%);box-shadow:1px 1px 1px rgba(0,0,0,.18), inset 3px 0 3px -2px rgba(0,0,0,.12)"></div>
<svg class="a" style="left:729px;top:78px;" width="4" height="17" viewBox="0 0 4 17"><rect x="0" width="1" height="100" fill="#c9c6bb"/><rect x="1" width="1" height="100" fill="#fff"/><rect x="2" width="1" height="100" fill="#c9c6bb"/><rect x="3" width="1" height="100" fill="#fff"/></svg>
<svg class="a" style="left:737px;top:80px;" width="13" height="14" viewBox="0 0 13 14"><rect x="2" y="1" width="9" height="1.6" fill="#000"/><path d="M4 4 H9 V7 H11.5 L6.5 12 L1.5 7 H4 Z" fill="#000"/></svg>
<div class="a t" style="left:711px;top:81px;font-size:11px;line-height:13px">1</div>
<div class="a" style="left:760px;top:75px;width:107px;height:23px;border:1px solid #8a877e;border-top-color:#e6e3da;border-left-color:#a9a69d;border-right-color:#5a5750;border-bottom-color:#2e2c28;border-radius:6px;background:linear-gradient(#fcfbf7 0,#f2f0e8 40%,#e4e1d7 75%,#d6d3c8 100%);box-shadow:1px 1px 1px rgba(0,0,0,.18), inset 3px 0 3px -2px rgba(0,0,0,.12)"></div>
<svg class="a" style="left:840px;top:78px;" width="4" height="17" viewBox="0 0 4 17"><rect x="0" width="1" height="100" fill="#c9c6bb"/><rect x="1" width="1" height="100" fill="#fff"/><rect x="2" width="1" height="100" fill="#c9c6bb"/><rect x="3" width="1" height="100" fill="#fff"/></svg>
<svg class="a" style="left:848px;top:80px;" width="13" height="14" viewBox="0 0 13 14"><rect x="2" y="1" width="9" height="1.6" fill="#000"/><path d="M4 4 H9 V7 H11.5 L6.5 12 L1.5 7 H4 Z" fill="#000"/></svg>
<div class="a t" style="left:769px;top:81px;font-size:11px;line-height:13px"></div>
<div class="a" style="left:768px;top:90px;width:55px;height:1px;background:#222"></div>
<svg class="a" style="left:872px;top:76px;" width="20" height="22" viewBox="0 0 20 22"><path d="M5 3 L15 13 L13 15 L3 5 Z" fill="#d08a50" stroke="#6a3a10" stroke-width=".7"/><path d="M15 13 L17 17 L13 15 Z" fill="#333"/><path d="M1 21 L5 16 H12 L15 21 Z" fill="#000"/></svg>
<svg class="a" style="left:893px;top:84px;" width="8" height="6" viewBox="0 0 8 6"><path d="M0 1 H7 L3.5 5 Z"/></svg>
<svg class="a" style="left:906px;top:76px;" width="20" height="22" viewBox="0 0 20 22"><path d="M1 21 L5 16 H12 L15 21 Z" fill="#fff"/><path d="M4 8 L11 3 L16 9 L9 14 Z" fill="#b8703a" stroke="#5a3010" stroke-width=".8"/><circle cx="10" cy="8" r="1.5" fill="#fff" stroke="#000" stroke-width=".5"/><path d="M2 12 Q1 7 5 7" stroke="#000" fill="none" stroke-width="1.4"/></svg>
<svg class="a" style="left:927px;top:84px;" width="8" height="6" viewBox="0 0 8 6"><path d="M0 1 H7 L3.5 5 Z"/></svg>
<div class="a" style="left:2px;top:102px;width:1394px;height:1px;background:#a8a59c"></div>
<div class="a" style="left:3px;top:103px;width:29px;height:496px;background:linear-gradient(90deg,#faf8f2 0,#f1efe6 30%,#e6e3d8 62%,#e0ddd2 82%,#ebe9df 94%,#fffff0 100%)"></div>
<svg class="a" style="left:8px;top:106px;" width="19" height="5" viewBox="0 0 19 5"><rect y="0" width="19" height="1" fill="#c4c1b6"/><rect y="1" width="19" height="1" fill="#fff"/><rect y="2" width="19" height="1" fill="#c4c1b6"/><rect y="3" width="19" height="1" fill="#fff"/><rect y="4" width="19" height="1" fill="#c4c1b6"/></svg>
<svg class="a" style="left:5px;top:115px;" width="26" height="22" viewBox="0 0 26 22"><rect x="7" y="2" width="17" height="15" rx="1.5" fill="#ddd" stroke="#555"/><g fill="#fff"><rect x="9" y="5" width="4" height="2.5"/><rect x="14" y="5" width="4" height="2.5"/><rect x="19" y="5" width="3" height="2.5"/><rect x="9" y="9" width="4" height="2.5"/><rect x="14" y="9" width="4" height="2.5"/><rect x="19" y="9" width="3" height="2.5"/><rect x="9" y="13" width="4" height="2.5"/><rect x="14" y="13" width="4" height="2.5"/></g><path d="M2 5 V16 M1 5 H3 M1 16 H3" stroke="#000" stroke-width="1"/></svg>
<svg class="a" style="left:6px;top:142px;" width="22" height="22" viewBox="0 0 22 22"><rect x="1.5" y="1.5" width="19" height="19" fill="none" stroke="#000" stroke-width="1.2" stroke-dasharray="1.2 1.2"/><g fill="#000"><rect x="0" y="0" width="3" height="3"/><rect x="19" y="0" width="3" height="3"/><rect x="0" y="19" width="3" height="3"/><rect x="19" y="19" width="3" height="3"/><rect x="9.5" y="0" width="3" height="2"/><rect x="9.5" y="20" width="3" height="2"/><rect x="0" y="9.5" width="2" height="3"/><rect x="20" y="9.5" width="2" height="3"/></g><rect x="4" y="4" width="14" height="14" fill="#2a6ad0"/><path d="M4 16 L9 9 L12 13 L14 10 L18 15 V18 H4 Z" fill="#555"/><rect x="4" y="16" width="14" height="2" fill="#2a9a2a"/><circle cx="14" cy="7" r="2" fill="#dff"/></svg>
<svg class="a" style="left:6px;top:175px;" width="22" height="22" viewBox="0 0 22 22"><rect x="1.5" y="1.5" width="19" height="19" fill="none" stroke="#000" stroke-width="1.2" stroke-dasharray="1.2 1.2"/><g fill="#000"><rect x="0" y="0" width="3" height="3"/><rect x="19" y="0" width="3" height="3"/><rect x="0" y="19" width="3" height="3"/><rect x="19" y="19" width="3" height="3"/><rect x="9.5" y="0" width="3" height="2"/><rect x="9.5" y="20" width="3" height="2"/><rect x="0" y="9.5" width="2" height="3"/><rect x="20" y="9.5" width="2" height="3"/></g><rect x="4" y="4" width="14" height="14" fill="#fff" stroke="#888"/><text x="5" y="15" font-size="9" font-family="Liberation Sans">ab</text></svg>
<svg class="a" style="left:6px;top:203px;" width="22" height="22" viewBox="0 0 22 22"><rect x="1.5" y="1.5" width="19" height="19" fill="none" stroke="#000" stroke-width="1.2" stroke-dasharray="1.2 1.2"/><g fill="#000"><rect x="0" y="0" width="3" height="3"/><rect x="19" y="0" width="3" height="3"/><rect x="0" y="19" width="3" height="3"/><rect x="19" y="19" width="3" height="3"/><rect x="9.5" y="0" width="3" height="2"/><rect x="9.5" y="20" width="3" height="2"/><rect x="0" y="9.5" width="2" height="3"/><rect x="20" y="9.5" width="2" height="3"/></g><rect x="4" y="4" width="14" height="14" fill="#fff" stroke="#888"/><path d="M5 11 L7 10 L9 15 L11 5 H17" stroke="#8a10a0" fill="none" stroke-width="1"/><text x="11" y="15" font-size="7" font-family="Liberation Serif" font-style="italic">x</text></svg>
<svg class="a" style="left:6px;top:231px;" width="22" height="22" viewBox="0 0 22 22"><rect x="1.5" y="1.5" width="19" height="19" fill="none" stroke="#000" stroke-width="1.2" stroke-dasharray="1.2 1.2"/><g fill="#000"><rect x="0" y="0" width="3" height="3"/><rect x="19" y="0" width="3" height="3"/><rect x="0" y="19" width="3" height="3"/><rect x="19" y="19" width="3" height="3"/><rect x="9.5" y="0" width="3" height="2"/><rect x="9.5" y="20" width="3" height="2"/><rect x="0" y="9.5" width="2" height="3"/><rect x="20" y="9.5" width="2" height="3"/></g><rect x="4" y="4" width="14" height="14" fill="#fff" stroke="#888"/><text x="8" y="15" font-size="11" font-weight="bold" font-family="Liberation Serif" fill="#207030">?</text></svg>
<svg class="a" style="left:23px;top:249px;" width="9" height="7" viewBox="0 0 9 7"><path d="M0 1 H5 V0 L9 3 L5 7 V5 H2 Z" transform="rotate(90 4.5 3.5)" fill="#000"/></svg>
<div class="a" style="left:32px;top:103px;width:2px;height:497px;background:#4a4a4a"></div>
<div class="a" style="left:34px;top:103px;width:136px;height:497px;background:#fff"></div>
<div class="a" style="left:34px;top:103px;width:134px;height:20px;background:linear-gradient(#faf9f4,#eeece4 60%,#e2dfd5);border-bottom:1px solid #b8b5ab;border-right:1px solid #b8b5ab"></div>
<div class="a" style="left:33px;top:102px;width:137px;height:2px;background:#3a3a3a"></div>
<div class="a t" style="left:38px;top:106px;font-size:11.6px;line-height:14px;letter-spacing:-0.2px">Document Structure</div>
<div class="a" style="left:169px;top:103px;width:1px;height:497px;background:#3a3a3a"></div>
<svg class="a" style="left:34px;top:123px;" width="60" height="45" viewBox="0 0 60 45"><g fill="none" stroke="#000" stroke-width="1" stroke-dasharray="1 1"><path d="M10.5 3 V30"/><path d="M11 10.5 H21"/><path d="M15 33.5 H19"/></g><g font-family="Liberation Sans" font-weight="bold" font-size="8"><text x="21" y="8">1.</text><text x="25" y="15">1.1</text><text x="25" y="22">1.2</text></g><rect x="29" y="5" width="9" height="1.3"/><rect x="37" y="11" width="4" height="1.3"/><rect x="37" y="18" width="4" height="1.3"/><rect x="6.5" y="28.5" width="9" height="9" fill="#fff" stroke="#aaa"/><path d="M8.5 33 H13.5 M11 30.5 V35.5" stroke="#000"/></svg>
<svg class="a" style="left:54px;top:147px;" width="22" height="22" viewBox="0 0 22 22"><rect x="1.5" y="1.5" width="19" height="19" fill="none" stroke="#000" stroke-width="1.2" stroke-dasharray="1.2 1.2"/><g fill="#000"><rect x="0" y="0" width="3" height="3"/><rect x="19" y="0" width="3" height="3"/><rect x="0" y="19" width="3" height="3"/><rect x="19" y="19" width="3" height="3"/><rect x="9.5" y="0" width="3" height="2"/><rect x="9.5" y="20" width="3" height="2"/><rect x="0" y="9.5" width="2" height="3"/><rect x="20" y="9.5" width="2" height="3"/></g><rect x="4" y="4" width="14" height="14" fill="#fff" stroke="#888"/><text x="5" y="15" font-size="9" font-family="Liberation Sans">ab</text></svg>
<div class="a t" style="left:78px;top:128px;font-size:11.3px;line-height:14px;letter-spacing:-0.1px">Arrangement</div>
<div class="a t" style="left:78px;top:152px;font-size:11.6px;line-height:14px;letter-spacing:-0.2px">Text Frames/Fr...</div>
<div class="a" style="left:170px;top:103px;width:5px;height:497px;background:linear-gradient(90deg,#fbfaf4,#f4f2ea 60%,#dcd9ce)"></div>
<div class="a" style="left:174px;top:103px;width:1px;height:497px;background:#5a5a5a"></div>
<div class="a" style="left:175px;top:103px;width:21px;height:20px;background:#ebe9e1"></div>
<div class="a" style="left:176px;top:103px;width:18px;height:19px;background:#ecebe5;border:1px solid #5a5a5a;border-right-color:#888;border-bottom-color:#ddd"></div>
<svg class="a" style="left:175px;top:103px;" width="19" height="19" viewBox="0 0 19 19"><path d="M4 3 V16 H16" stroke="#000" stroke-width="2" fill="none"/></svg>
<svg class="a" style="left:196px;top:103px;" width="1200" height="19" viewBox="0 0 1200 19"><rect x="0" y="0" width="1201" height="19" fill="#ebe9e1"/><rect x="57.5" y="0" width="1121.5" height="19" fill="#fff"/><rect x="0" y="0" width="1201" height="1" fill="#555"/><rect x="14" y="7" width="1" height="6" fill="#000"/><rect x="28" y="5" width="1" height="10" fill="#000"/><rect x="43" y="7" width="1" height="6" fill="#000"/><rect x="73" y="7" width="1" height="6" fill="#000"/><rect x="88" y="5" width="1" height="10" fill="#000"/><rect x="102" y="7" width="1" height="6" fill="#000"/><text x="116.39999999999998" y="14" font-size="10" text-anchor="middle" font-family="Liberation Sans">2</text><rect x="132" y="7" width="1" height="6" fill="#000"/><rect x="147" y="5" width="1" height="10" fill="#000"/><rect x="161" y="7" width="1" height="6" fill="#000"/><text x="175.5" y="14" font-size="10" text-anchor="middle" font-family="Liberation Sans">3</text><rect x="191" y="7" width="1" height="6" fill="#000"/><rect x="206" y="5" width="1" height="10" fill="#000"/><rect x="221" y="7" width="1" height="6" fill="#000"/><text x="234.60000000000002" y="14" font-size="10" text-anchor="middle" font-family="Liberation Sans">4</text><rect x="250" y="7" width="1" height="6" fill="#000"/><rect x="265" y="5" width="1" height="10" fill="#000"/><rect x="280" y="7" width="1" height="6" fill="#000"/><text x="293.7" y="14" font-size="10" text-anchor="middle" font-family="Liberation Sans">5</text><rect x="309" y="7" width="1" height="6" fill="#000"/><rect x="324" y="5" width="1" height="10" fill="#000"/><rect x="339" y="7" width="1" height="6" fill="#000"/><text x="352.79999999999995" y="14" font-size="10" text-anchor="middle" font-family="Liberation Sans">6</text><rect x="368" y="7" width="1" height="6" fill="#000"/><rect x="383" y="5" width="1" height="10" fill="#000"/><rect x="398" y="7" width="1" height="6" fill="#000"/><text x="411.9" y="14" font-size="10" text-anchor="middle" font-family="Liberation Sans">7</text><rect x="427" y="7" width="1" height="6" fill="#000"/><rect x="442" y="5" width="1" height="10" fill="#000"/><rect x="457" y="7" width="1" height="6" fill="#000"/><text x="471.0" y="14" font-size="10" text-anchor="middle" font-family="Liberation Sans">8</text><rect x="486" y="7" width="1" height="6" fill="#000"/><rect x="501" y="5" width="1" height="10" fill="#000"/><rect x="516" y="7" width="1" height="6" fill="#000"/><text x="530.0999999999999" y="14" font-size="10" text-anchor="middle" font-family="Liberation Sans">9</text><rect x="546" y="7" width="1" height="6" fill="#000"/><rect x="560" y="5" width="1" height="10" fill="#000"/><rect x="575" y="7" width="1" height="6" fill="#000"/><text x="589.2" y="14" font-size="10" text-anchor="middle" font-family="Liberation Sans">10</text><rect x="605" y="7" width="1" height="6" fill="#000"/><rect x="619" y="5" width="1" height="10" fill="#000"/><rect x="634" y="7" width="1" height="6" fill="#000"/><text x="648.3" y="14" font-size="10" text-anchor="middle" font-family="Liberation Sans">11</text><rect x="664" y="7" width="1" height="6" fill="#000"/><rect x="679" y="5" width="1" height="10" fill="#000"/><rect x="693" y="7" width="1" height="6" fill="#000"/><text x="707.4000000000001" y="14" font-size="10" text-anchor="middle" font-family="Liberation Sans">12</text><rect x="723" y="7" width="1" height="6" fill="#000"/><rect x="738" y="5" width="1" height="10" fill="#000"/><rect x="752" y="7" width="1" height="6" fill="#000"/><text x="766.5" y="14" font-size="10" text-anchor="middle" font-family="Liberation Sans">13</text><rect x="782" y="7" width="1" height="6" fill="#000"/><rect x="797" y="5" width="1" height="10" fill="#000"/><rect x="812" y="7" width="1" height="6" fill="#000"/><text x="825.5999999999999" y="14" font-size="10" text-anchor="middle" font-family="Liberation Sans">14</text><rect x="841" y="7" width="1" height="6" fill="#000"/><rect x="856" y="5" width="1" height="10" fill="#000"/><rect x="871" y="7" width="1" height="6" fill="#000"/><text x="884.7" y="14" font-size="10" text-anchor="middle" font-family="Liberation Sans">15</text><rect x="900" y="7" width="1" height="6" fill="#000"/><rect x="915" y="5" width="1" height="10" fill="#000"/><rect x="930" y="7" width="1" height="6" fill="#000"/><text x="943.8" y="14" font-size="10" text-anchor="middle" font-family="Liberation Sans">16</text><rect x="959" y="7" width="1" height="6" fill="#000"/><rect x="974" y="5" width="1" height="10" fill="#000"/><rect x="989" y="7" width="1" height="6" fill="#000"/><text x="1002.9000000000001" y="14" font-size="10" text-anchor="middle" font-family="Liberation Sans">17</text><rect x="1018" y="7" width="1" height="6" fill="#000"/><rect x="1033" y="5" width="1" height="10" fill="#000"/><rect x="1048" y="7" width="1" height="6" fill="#000"/><text x="1062.0" y="14" font-size="10" text-anchor="middle" font-family="Liberation Sans">18</text><rect x="1077" y="7" width="1" height="6" fill="#000"/><rect x="1092" y="5" width="1" height="10" fill="#000"/><rect x="1107" y="7" width="1" height="6" fill="#000"/><text x="1121.1000000000001" y="14" font-size="10" text-anchor="middle" font-family="Liberation Sans">19</text><rect x="1137" y="7" width="1" height="6" fill="#000"/><rect x="1151" y="5" width="1" height="10" fill="#000"/><rect x="1166" y="7" width="1" height="6" fill="#000"/><text x="1180.2" y="14" font-size="10" text-anchor="middle" font-family="Liberation Sans">20</text><rect x="1196" y="7" width="1" height="6" fill="#000"/><rect x="1210" y="5" width="1" height="10" fill="#000"/><rect x="1225" y="7" width="1" height="6" fill="#000"/><path d="M53.5 2.5 H61.5 L58.3 9.5 L61.5 17.5 H53.5 L56.7 9.5 Z" fill="#a0a0a0" stroke="#000" stroke-width=".9"/><rect x="53.5" y="2" width="8" height="1.2"/><rect x="53.5" y="16.8" width="8" height="1.2"/><path d="M1174.5 17 L1178.5 12 L1182.5 17 Z" fill="#aaa" stroke="#000" stroke-width=".6"/><rect x="1178" y="0" width="1.2" height="14" fill="#000"/></svg>
<div class="a" style="left:194px;top:121px;width:1202px;height:2px;background:#555"></div>
<svg class="a" style="left:177px;top:122px;" width="16" height="478" viewBox="0 0 16 478"><rect x="0" y="0" width="18" height="478" fill="#ebe9e1"/><rect x="0" y="88" width="18" height="478" fill="#fff"/><text x="8" y="5" font-size="10" text-anchor="middle" font-family="Liberation Sans">0</text><rect x="5" y="16" width="6" height="1" fill="#000"/><rect x="3" y="30" width="10" height="1" fill="#000"/><rect x="5" y="45" width="6" height="1" fill="#000"/><text x="8" y="64" font-size="10" text-anchor="middle" font-family="Liberation Sans">1</text><rect x="5" y="75" width="6" height="1" fill="#000"/><rect x="3" y="90" width="10" height="1" fill="#000"/><rect x="5" y="104" width="6" height="1" fill="#000"/><text x="8" y="123" font-size="10" text-anchor="middle" font-family="Liberation Sans">2</text><rect x="5" y="134" width="6" height="1" fill="#000"/><rect x="3" y="148" width="10" height="1" fill="#000"/><rect x="5" y="163" width="6" height="1" fill="#000"/><text x="8" y="182" font-size="10" text-anchor="middle" font-family="Liberation Sans">3</text><rect x="5" y="193" width="6" height="1" fill="#000"/><rect x="3" y="208" width="10" height="1" fill="#000"/><rect x="5" y="222" width="6" height="1" fill="#000"/><text x="8" y="241" font-size="10" text-anchor="middle" font-family="Liberation Sans">4</text><rect x="5" y="252" width="6" height="1" fill="#000"/><rect x="3" y="266" width="10" height="1" fill="#000"/><rect x="5" y="281" width="6" height="1" fill="#000"/><text x="8" y="300" font-size="10" text-anchor="middle" font-family="Liberation Sans">5</text><rect x="5" y="311" width="6" height="1" fill="#000"/><rect x="3" y="326" width="10" height="1" fill="#000"/><rect x="5" y="340" width="6" height="1" fill="#000"/><text x="8" y="359" font-size="10" text-anchor="middle" font-family="Liberation Sans">6</text><rect x="5" y="370" width="6" height="1" fill="#000"/><rect x="3" y="384" width="10" height="1" fill="#000"/><rect x="5" y="399" width="6" height="1" fill="#000"/><text x="8" y="418" font-size="10" text-anchor="middle" font-family="Liberation Sans">7</text><rect x="5" y="429" width="6" height="1" fill="#000"/><rect x="3" y="444" width="10" height="1" fill="#000"/><rect x="5" y="458" width="6" height="1" fill="#000"/><text x="8" y="477" font-size="10" text-anchor="middle" font-family="Liberation Sans">8</text><rect x="5" y="488" width="6" height="1" fill="#000"/><rect x="3" y="502" width="10" height="1" fill="#000"/><rect x="5" y="517" width="6" height="1" fill="#000"/><rect x="0" y="88" width="18" height="1.2" fill="#000"/><rect x="3" y="90" width="11" height="1.2" fill="#000"/></svg>
<div class="a" style="left:176px;top:122px;width:1px;height:478px;background:#5a5a5a"></div>
<div class="a" style="left:193px;top:122px;width:1px;height:478px;background:#f4f2ec"></div>
<div class="a" style="left:176px;top:599px;width:19px;height:1px;background:#999"></div>
<div class="a" style="left:177px;top:122px;width:16px;height:2px;background:#ecebe5"></div>
<div class="a" style="left:176px;top:122px;width:18px;height:1px;background:#5a5a5a"></div>
<div class="a" style="left:195px;top:121px;width:2px;height:463px;background:#555"></div>
<div class="a" style="left:197px;top:123px;width:1184px;height:461px;background:#fff"></div>
<div class="a" style="left:253px;top:210px;width:1px;height:374px;background:#c8c8c8"></div>
<div class="a" style="left:253px;top:210px;width:1125px;height:1px;background:#c8c8c8"></div>
<div class="a" style="left:1377px;top:210px;width:1px;height:374px;background:#c8c8c8"></div>
<div class="a t" style="left:255px;top:211px;font-family:'Liberation Serif',serif;font-size:22px;line-height:26px;color:#000;letter-spacing:0.88px">You can of course buy and install a fully-fledged commercial XML editor with XSLT support, and run this</div>
<div class="a t" style="left:255px;top:236.6px;font-family:'Liberation Serif',serif;font-size:22px;line-height:26px;color:#000;letter-spacing:1.06px">application within it. However, this is beyond the reach of many users, so to do this unaided you just need to</div>
<div class="a t" style="left:255px;top:262.5px;font-family:'Liberation Serif',serif;font-size:22px;line-height:26px;color:#000;letter-spacing:0.84px">install two pieces of software: <span style="color:#0000c0;font-style:italic;text-decoration:underline;text-decoration-thickness:1px;text-underline-offset:2px">Java</span> and <span style="color:#0000c0;font-style:italic;text-decoration:underline;text-decoration-thickness:1px;text-underline-offset:2px">Saxon</span> (URIs are correct at the time of writing). Neither of these has a</div>
<div class="a t" style="left:255px;top:289px;font-family:'Liberation Serif',serif;font-size:22px;line-height:26px;color:#000;letter-spacing:1.12px;width:536px;overflow:hidden">visual interface: they are run from the command-line in a terminal window, in a similar way to LaTeX.</div>
<div class="a t" style="left:1156px;top:289px;font-family:'Liberation Serif',serif;font-size:22px;line-height:26px;color:#000;letter-spacing:0.9px">T<span style="position:relative;top:4px;margin-left:-2px">E</span>X.</div>
<div class="a" style="left:1381px;top:122px;width:15px;height:462px;background:linear-gradient(90deg,#e2dfd5,#fbfaf5 40%,#f2f0e8 70%,#dcd9ce)"></div>
<div class="a" style="left:1381px;top:123px;width:15px;height:16px;background:linear-gradient(#fdfcf8,#e6e3d9);border:1px solid #a09d94;border-radius:2px"></div>
<svg class="a" style="left:1381px;top:123px;" width="15" height="16" viewBox="0 0 15 16"><path d="M7.5 3 L12 8 H9.5 V12 H5.5 V8 H3 Z" fill="#000"/></svg>
<div class="a" style="left:1381px;top:140px;width:15px;height:107px;background:linear-gradient(90deg,#8a7a50 0,#8a7a50 1px,#fff4b0 1px,#e2c575 3px,#f5dd90 5px,#fee9a0 8px,#f0d488 11px,#d6b868 13px,#7a6a40 14px);border-top:1px solid #8a7a50;border-bottom:1px solid #7a6a40"></div>
<div class="a" style="left:1382px;top:185px;width:13px;height:15px;background:repeating-linear-gradient(#7a6a3a 0,#7a6a3a 1px,#fffcc0 1px,#fffcc0 2px)"></div>
<div class="a" style="left:1381px;top:553px;width:15px;height:31px;background:linear-gradient(90deg,#fdfcf8,#e6e3d9);border:1px solid #a09d94;border-radius:2px"></div>
<svg class="a" style="left:1381px;top:553px;" width="15" height="31" viewBox="0 0 15 31"><path d="M7.5 3 L12 8 H9.5 V11 H5.5 V8 H3 Z" fill="#000"/><rect x="4" y="14.5" width="7" height="1.2" fill="#000"/><path d="M7.5 28 L12 23 H9.5 V19 H5.5 V23 H3 Z" fill="#000"/></svg>
<div class="a" style="left:196px;top:584px;width:1185px;height:16px;background:linear-gradient(#e2dfd5,#fbfaf5 40%,#f2f0e8 70%,#dcd9ce);border-top:1px solid #b0ada3"></div>
<div class="a" style="left:196px;top:584px;width:17px;height:16px;background:linear-gradient(#fdfcf8,#e6e3d9);border:1px solid #a09d94;border-radius:2px"></div>
<svg class="a" style="left:196px;top:584px;" width="17" height="16" viewBox="0 0 17 16"><path d="M3 8 L8 3.5 V6 H12 V10 H8 V12.5 Z" fill="#000"/></svg>
<div class="a" style="left:213px;top:584px;width:1087px;height:16px;background:linear-gradient(#8a7a50 0,#8a7a50 1px,#fff4b0 1px,#e2c575 3px,#f5dd90 5px,#fee9a0 8px,#f0d488 11px,#d6b868 13px,#7a6a40 14px);border-left:1px solid #8a7a50;border-right:1px solid #7a6a40"></div>
<div class="a" style="left:749px;top:585px;width:16px;height:13px;background:repeating-linear-gradient(90deg,#fffcc0 0,#fffcc0 1px,#7a6a3a 1px,#7a6a3a 2px)"></div>
<div class="a" style="left:1350px;top:584px;width:31px;height:16px;background:linear-gradient(#fdfcf8,#e6e3d9);border:1px solid #a09d94;border-radius:2px"></div>
<svg class="a" style="left:1350px;top:584px;" width="31" height="16" viewBox="0 0 31 16"><path d="M3 8 L8 3.5 V6 H12 V10 H8 V12.5 Z" fill="#000"/><rect x="15" y="4" width="1.2" height="8" fill="#000"/><path d="M28 8 L23 3.5 V6 H19 V10 H23 V12.5 Z" fill="#000"/></svg>
<div class="a" style="left:1381px;top:584px;width:15px;height:16px;background:#ebe9e1"></div>
<div class="a" style="left:2px;top:600px;width:1394px;height:20px;background:#ebe9e2"></div>
<div class="a" style="left:5px;top:603px;width:51px;height:16px;border:1px solid #a09d94;border-right-color:#fff;border-bottom-color:#fff"></div>
<div class="a t" style="left:9px;top:605px;font-size:11.5px;line-height:13px;letter-spacing:-0.2px">Page 1/1</div>
<div class="a" style="left:0px;top:0px;width:3px;height:623px;background:linear-gradient(90deg,#737373 0,#737373 1px,#4a4a4a 1px)"></div>
<div class="a" style="left:1397px;top:0px;width:3px;height:623px;background:linear-gradient(90deg,#4a4a4a 0,#4a4a4a 2px,#737373 2px)"></div>
<div class="a" style="left:0px;top:620px;width:1400px;height:3px;background:#2a2a2a"></div>
<div class="a" style="left:791px;top:287px;width:370px;height:308px;background:#8a8a8a;border-right:2px solid #111;border-bottom:2px solid #111"></div>
<div class="a" style="left:794px;top:289px;width:364px;height:17px;background:linear-gradient(#5a5a5a 0,#929292 2px,#e8e8e8 6px,#ffffff 8px,#cfcfcf 11px,#7a7a7a 15px,#303030 17px)"></div>
<div class="a" style="left:853px;top:290px;width:232px;height:16px;background:linear-gradient(#7888b0,#4c5c8c 45%,#3a4878);border:1px solid #2a2a2a;box-shadow:inset 0 0 0 1px #8a9ac0"></div>
<div class="a t" style="left:853px;top:293px;width:232px;text-align:center;color:#fff;font-weight:bold;font-size:11px;line-height:13px;letter-spacing:-0.1px">Latex Export Filter Parameters - KWord</div>
<svg class="a" style="left:796px;top:289px;" width="18" height="18" viewBox="0 0 18 18"><path d="M1 6.5 L9.5 1 L13 8 L4.5 13.5 Z" fill="#fff" stroke="#000" stroke-width="1" stroke-dasharray="1.5 1"/><path d="M5 6 L9 3.5 M6 8 L10 5.5" stroke="#888" stroke-width=".6"/><path d="M7 14 L11 12 L12 16 L8 17 Z" fill="#fff"/><path d="M1.5 16 L15.5 5.5" stroke="#000" stroke-width="4.2"/><path d="M2 15.5 L15 6" stroke="#e00000" stroke-width="2.4"/><path d="M1 17 L3 15.5" stroke="#1020c0" stroke-width="1.6"/><circle cx="13.5" cy="14.5" r="2.8" fill="#0010f0" stroke="#000" stroke-width=".6"/><rect x="13" y="13" width="1.1" height="3.2" fill="#fff"/></svg>
<svg class="a" style="left:814px;top:290px;" width="16" height="16" viewBox="0 0 16 16"><defs><radialGradient id="rq822" cx="50%" cy="30%" r="65%"><stop offset="0" stop-color="#7a8498"/><stop offset="1" stop-color="#2a3040"/></radialGradient></defs><circle cx="8" cy="8" r="6" fill="url(#rq822)" stroke="#111"/><path d="M5 8.5 Q8 6.5 11 8.5" stroke="#bbb" fill="none"/></svg>
<svg class="a" style="left:1110.5px;top:290.3px;" width="16" height="16" viewBox="0 0 16 16"><defs><radialGradient id="rq1118.5" cx="50%" cy="30%" r="65%"><stop offset="0" stop-color="#7a8498"/><stop offset="1" stop-color="#2a3040"/></radialGradient></defs><circle cx="8" cy="8" r="6" fill="url(#rq1118.5)" stroke="#111"/><path d="M5.5 7 L8 9.5 L10.5 7" stroke="#ddd" fill="none" stroke-width="1.2"/></svg>
<svg class="a" style="left:1125.5px;top:290.3px;" width="16" height="16" viewBox="0 0 16 16"><defs><radialGradient id="rq1133.5" cx="50%" cy="30%" r="65%"><stop offset="0" stop-color="#7a8498"/><stop offset="1" stop-color="#2a3040"/></radialGradient></defs><circle cx="8" cy="8" r="6" fill="url(#rq1133.5)" stroke="#111"/><path d="M5.5 9.5 L8 7 L10.5 9.5 Z" fill="#ddd"/></svg>
<svg class="a" style="left:1140.5px;top:290.3px;" width="16" height="16" viewBox="0 0 16 16"><defs><radialGradient id="rq1148.5" cx="50%" cy="30%" r="65%"><stop offset="0" stop-color="#7a8498"/><stop offset="1" stop-color="#2a3040"/></radialGradient></defs><circle cx="8" cy="8" r="6" fill="url(#rq1148.5)" stroke="#111"/><path d="M5.5 10.5 L10.5 5.5" stroke="#ddd" stroke-width="1.2"/></svg>
<div class="a" style="left:1109px;top:290px;width:1px;height:16px;background:#777"></div>
<div class="a" style="left:794px;top:307px;width:364px;height:285px;background:#ecebe5"></div>
<div class="a" style="left:805px;top:324px;width:341px;height:63px;border:1px solid #5e5c56;box-shadow:inset 1px 1px 0 #fff, 1px 1px 0 #fff"></div>
<div class="a t" style="left:812px;top:318px;font-size:11px;line-height:14px;letter-spacing:-0.1px;background:#ecebe5;padding:0 2px">Document Style</div>
<svg class="a" style="left:816px;top:337px;" width="16" height="16" viewBox="0 0 16 16"><defs><linearGradient id="rg345" x1="0" y1="0" x2="1" y2="1"><stop offset="0" stop-color="#3a3a3a"/><stop offset=".55" stop-color="#8a8880"/><stop offset="1" stop-color="#d8d6ce"/></linearGradient></defs><circle cx="8" cy="8.6" r="7.2" fill="#bdbbb3" opacity=".7"/><circle cx="7.5" cy="7.5" r="6.8" fill="#fff"/><circle cx="7.5" cy="7.5" r="5.6" fill="none" stroke="url(#rg345)" stroke-width="1.6"/><circle cx="7.5" cy="7.5" r="4.4" fill="#fbfbf8" stroke="#fff" stroke-width=".8"/><rect x="5.2" y="5.2" width="4.6" height="4.6" fill="#000"/></svg>
<div class="a t" style="left:837px;top:338px;font-size:11px;line-height:14px;letter-spacing:-0.1px">Latex style</div>
<svg class="a" style="left:816px;top:360px;" width="16" height="16" viewBox="0 0 16 16"><defs><linearGradient id="rg368" x1="0" y1="0" x2="1" y2="1"><stop offset="0" stop-color="#3a3a3a"/><stop offset=".55" stop-color="#8a8880"/><stop offset="1" stop-color="#d8d6ce"/></linearGradient></defs><circle cx="8" cy="8.6" r="7.2" fill="#bdbbb3" opacity=".7"/><circle cx="7.5" cy="7.5" r="6.8" fill="#fff"/><circle cx="7.5" cy="7.5" r="5.6" fill="none" stroke="url(#rg368)" stroke-width="1.6"/><circle cx="7.5" cy="7.5" r="4.4" fill="#fbfbf8" stroke="#fff" stroke-width=".8"/></svg>
<div class="a t" style="left:837px;top:361px;font-size:11px;line-height:14px;letter-spacing:-0.1px">KWord style</div>
<div class="a" style="left:805px;top:400px;width:341px;height:63px;border:1px solid #5e5c56;box-shadow:inset 1px 1px 0 #fff, 1px 1px 0 #fff"></div>
<div class="a t" style="left:812px;top:394px;font-size:11px;line-height:14px;letter-spacing:-0.1px;background:#ecebe5;padding:0 2px">Language</div>
<svg class="a" style="left:816px;top:413px;" width="16" height="16" viewBox="0 0 16 16"><defs><linearGradient id="rg421" x1="0" y1="0" x2="1" y2="1"><stop offset="0" stop-color="#3a3a3a"/><stop offset=".55" stop-color="#8a8880"/><stop offset="1" stop-color="#d8d6ce"/></linearGradient></defs><circle cx="8" cy="8.6" r="7.2" fill="#bdbbb3" opacity=".7"/><circle cx="7.5" cy="7.5" r="6.8" fill="#fff"/><circle cx="7.5" cy="7.5" r="5.6" fill="none" stroke="url(#rg421)" stroke-width="1.6"/><circle cx="7.5" cy="7.5" r="4.4" fill="#fbfbf8" stroke="#fff" stroke-width=".8"/></svg>
<div class="a t" style="left:837px;top:414px;font-size:11px;line-height:14px;letter-spacing:-0.1px">Unicode</div>
<svg class="a" style="left:816px;top:436px;" width="16" height="16" viewBox="0 0 16 16"><defs><linearGradient id="rg444" x1="0" y1="0" x2="1" y2="1"><stop offset="0" stop-color="#3a3a3a"/><stop offset=".55" stop-color="#8a8880"/><stop offset="1" stop-color="#d8d6ce"/></linearGradient></defs><circle cx="8" cy="8.6" r="7.2" fill="#bdbbb3" opacity=".7"/><circle cx="7.5" cy="7.5" r="6.8" fill="#fff"/><circle cx="7.5" cy="7.5" r="5.6" fill="none" stroke="url(#rg444)" stroke-width="1.6"/><circle cx="7.5" cy="7.5" r="4.4" fill="#fbfbf8" stroke="#fff" stroke-width=".8"/><rect x="5.2" y="5.2" width="4.6" height="4.6" fill="#000"/></svg>
<div class="a t" style="left:837px;top:437px;font-size:11px;line-height:14px;letter-spacing:-0.1px">latin1</div>
<div class="a" style="left:805px;top:476px;width:341px;height:63px;border:1px solid #5e5c56;box-shadow:inset 1px 1px 0 #fff, 1px 1px 0 #fff"></div>
<div class="a t" style="left:812px;top:470px;font-size:11px;line-height:14px;letter-spacing:-0.1px;background:#ecebe5;padding:0 2px">Document Type</div>
<svg class="a" style="left:816px;top:489px;" width="16" height="16" viewBox="0 0 16 16"><defs><linearGradient id="rg497" x1="0" y1="0" x2="1" y2="1"><stop offset="0" stop-color="#3a3a3a"/><stop offset=".55" stop-color="#8a8880"/><stop offset="1" stop-color="#d8d6ce"/></linearGradient></defs><circle cx="8" cy="8.6" r="7.2" fill="#bdbbb3" opacity=".7"/><circle cx="7.5" cy="7.5" r="6.8" fill="#fff"/><circle cx="7.5" cy="7.5" r="5.6" fill="none" stroke="url(#rg497)" stroke-width="1.6"/><circle cx="7.5" cy="7.5" r="4.4" fill="#fbfbf8" stroke="#fff" stroke-width=".8"/><rect x="5.2" y="5.2" width="4.6" height="4.6" fill="#000"/></svg>
<div class="a t" style="left:837px;top:490px;font-size:11px;line-height:14px;letter-spacing:-0.1px">New document</div>
<svg class="a" style="left:816px;top:512px;" width="16" height="16" viewBox="0 0 16 16"><defs><linearGradient id="rg520" x1="0" y1="0" x2="1" y2="1"><stop offset="0" stop-color="#3a3a3a"/><stop offset=".55" stop-color="#8a8880"/><stop offset="1" stop-color="#d8d6ce"/></linearGradient></defs><circle cx="8" cy="8.6" r="7.2" fill="#bdbbb3" opacity=".7"/><circle cx="7.5" cy="7.5" r="6.8" fill="#fff"/><circle cx="7.5" cy="7.5" r="5.6" fill="none" stroke="url(#rg520)" stroke-width="1.6"/><circle cx="7.5" cy="7.5" r="4.4" fill="#fbfbf8" stroke="#fff" stroke-width=".8"/></svg>
<div class="a t" style="left:837px;top:513px;font-size:11px;line-height:14px;letter-spacing:-0.1px">Embedded document</div>
<div class="a" style="left:1015px;top:555px;width:53px;height:25px;border:3px solid #333;border-top-color:#1a1a1a;border-bottom-color:#555;border-radius:7px;background:linear-gradient(#fcfbf6,#f2f0e8 50%,#e6e3d9);box-shadow:0 1px 1px #fff"></div>
<div class="a" style="left:1020px;top:559px;width:43px;height:17px;border:1px dotted #000"></div>
<div class="a t" style="left:1015px;top:561px;width:53px;text-align:center;font-size:12px;line-height:14px"><u>O</u>K</div>
<div class="a" style="left:1075px;top:557px;width:70px;height:22px;border:1px solid #55524a;border-radius:6px;background:linear-gradient(#fcfbf6,#f0eee6 50%,#dedbd1);box-shadow:1px 1px 1px rgba(0,0,0,.2)"></div>
<div class="a t" style="left:1075px;top:561px;width:70px;text-align:center;font-size:12px;line-height:14px"><u>C</u>ancel</div>
</body></html>
